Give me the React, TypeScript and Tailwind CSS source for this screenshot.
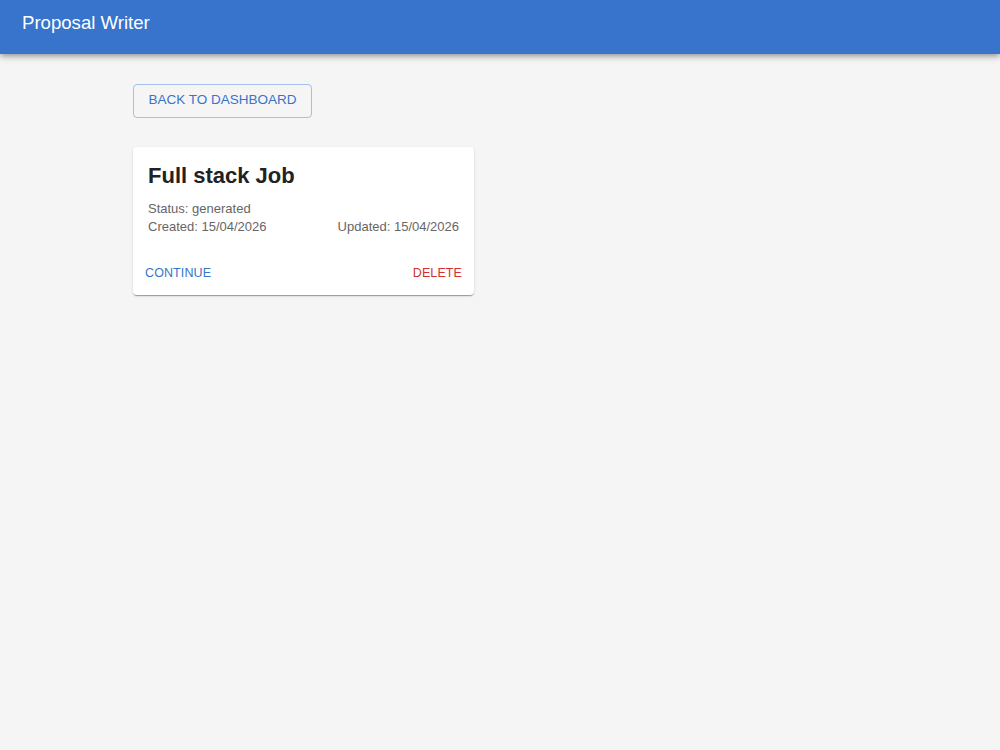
import React from "react";

export default function App() {
  return (
    <div className="min-h-[750px] w-full bg-[#f5f5f5]" style={{ fontFamily: '"Liberation Sans", Arial, sans-serif' }}>
      <header className="h-[54px] bg-[#3874cb] flex items-center px-[22px] pb-[8px] shadow-[0_2px_4px_-1px_rgba(0,0,0,0.2),0_4px_5px_0_rgba(0,0,0,0.14),0_1px_10px_0_rgba(0,0,0,0.12)]">
        <h1 className="text-white text-[18.6px] leading-none">Proposal Writer</h1>
      </header>
      <main className="pl-[133px] pt-[30px]">
        <button className="h-[34px] w-[179px] rounded-[4px] border border-[#a4c0ea] text-[#3874cb] text-[13.5px] uppercase flex items-center justify-center pb-[1px]">
          Back to Dashboard
        </button>
        <div className="mt-[29px] w-[341px] h-[148px] bg-white rounded-[4px] shadow-[0_2px_1px_-1px_rgba(0,0,0,0.2),0_1px_1px_0_rgba(0,0,0,0.14),0_1px_3px_0_rgba(0,0,0,0.12)] flex flex-col">
          <div className="px-[15px] pt-[14px]">
            <h2 className="text-[22px] font-bold text-[#222] leading-[30px]">Full stack Job</h2>
            <div className="mt-[9px] text-[13px] text-[#666] leading-[18px]">Status: generated</div>
            <div className="flex justify-between text-[13px] text-[#666] leading-[18px]">
              <span>Created: 15/04/2026</span>
              <span>Updated: 15/04/2026</span>
            </div>
          </div>
          <div className="flex justify-between px-[12px] mt-[28px]">
            <button className="text-[12.5px] text-[#3874cb] tracking-[0.1px] uppercase">Continue</button>
            <button className="text-[12.5px] text-[#d32f2f] tracking-[0.1px] uppercase">Delete</button>
          </div>
        </div>
      </main>
    </div>
  );
}
